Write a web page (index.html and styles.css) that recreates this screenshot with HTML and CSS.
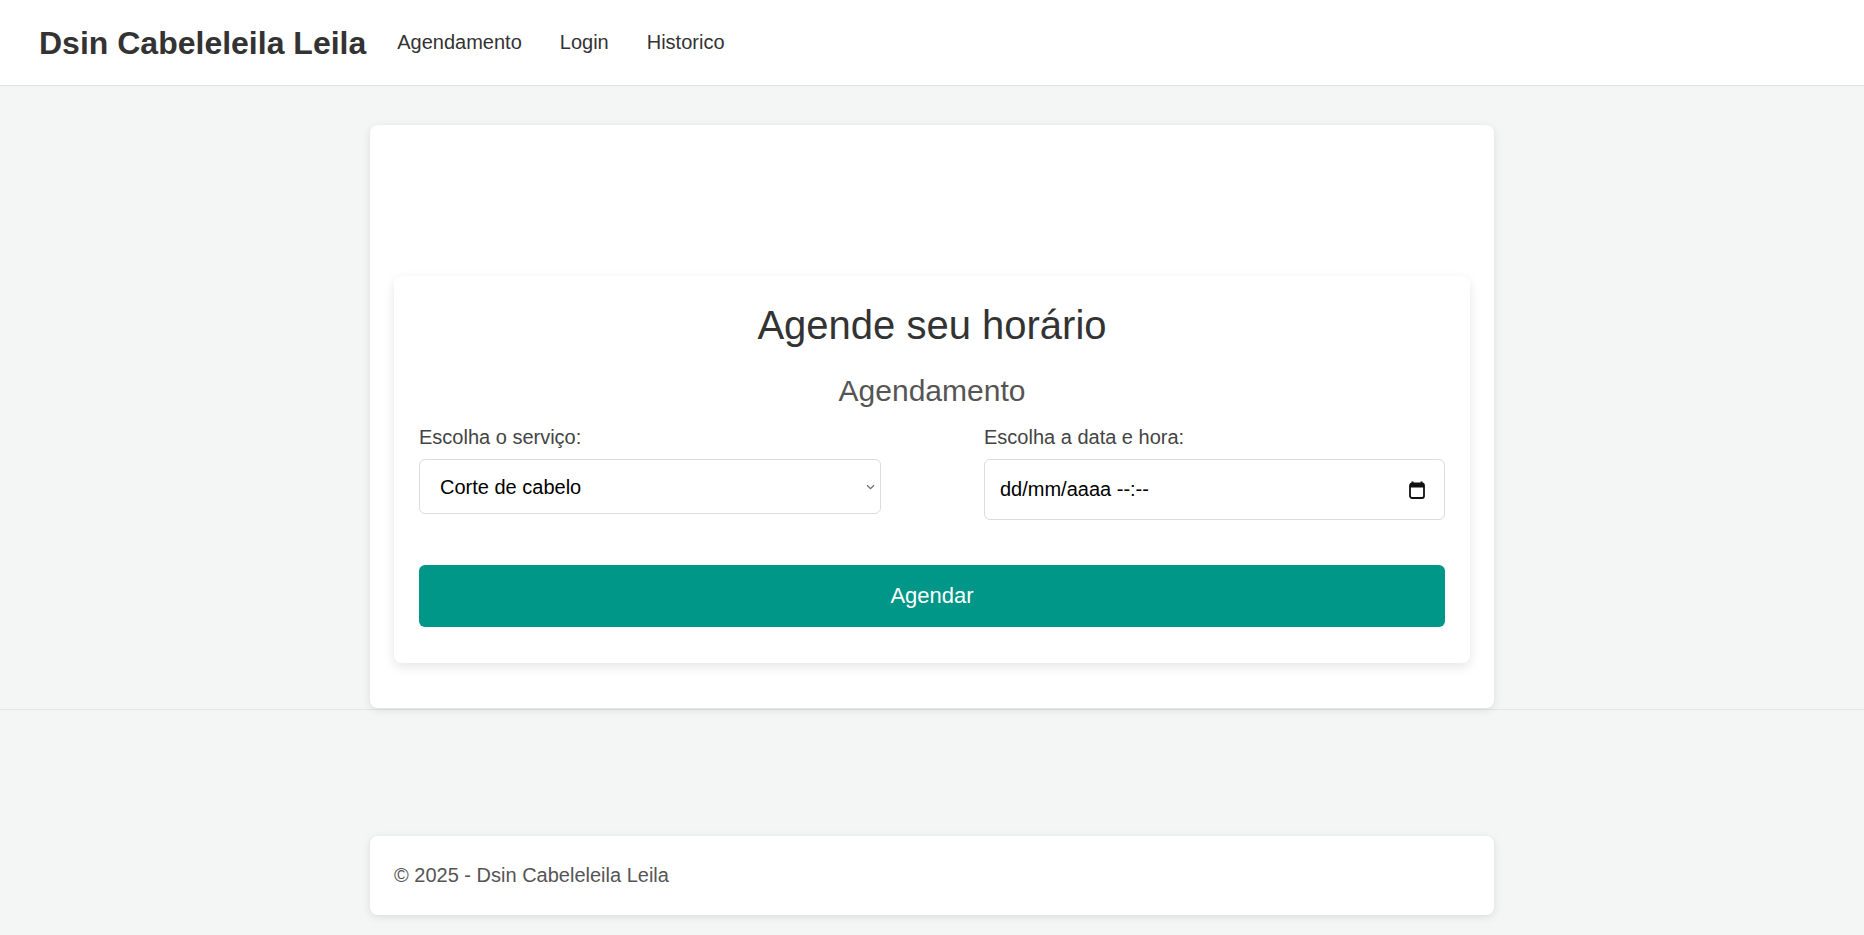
FILE: index.html
```html
<!DOCTYPE html>
<html lang="pt-BR">
<head>
<meta charset="utf-8">
<title>Dsin Cabeleleila Leila</title>
<link rel="stylesheet" href="styles.css">
</head>
<body>
<header class="topbar">
  <a class="brand" href="#">Dsin Cabeleleila Leila</a>
  <nav class="nav">
    <a class="nav-link" href="#">Agendamento</a>
    <a class="nav-link" href="#">Login</a>
    <a class="nav-link" href="#">Historico</a>
  </nav>
</header>

<main class="main">
  <section class="page-card">
    <div class="spacer"></div>
    <div class="form-card">
      <h1 class="title">Agende seu horário</h1>
      <h2 class="subtitle">Agendamento</h2>
      <form class="form">
        <div class="fields">
          <div class="field">
            <label class="label" for="servico">Escolha o serviço:</label>
            <div class="select-wrap">
              <select class="select" id="servico">
                <option>Corte de cabelo</option>
                <option>Coloração</option>
                <option>Escova</option>
              </select>
              <svg class="chevron" width="9" height="6" viewBox="0 0 9 6" aria-hidden="true">
                <path d="M1 1.2 L4.5 4.6 L8 1.2" fill="none" stroke="#6f6f6f" stroke-width="1.3"/>
              </svg>
            </div>
          </div>
          <div class="field">
            <label class="label" for="data">Escolha a data e hora:</label>
            <div class="date-field" id="data">
              <span class="date-text">dd/mm/aaaa --:--</span>
              <svg class="cal-icon" width="16" height="18" viewBox="0 0 16 18" aria-hidden="true">
                <rect x="2.5" y="0.5" width="2" height="3" fill="#111"/>
                <rect x="11.5" y="0.5" width="2" height="3" fill="#111"/>
                <rect x="1" y="2.5" width="14" height="14.5" rx="2" ry="2" fill="none" stroke="#111" stroke-width="1.8"/>
                <rect x="1" y="2.5" width="14" height="4" fill="#111"/>
              </svg>
            </div>
          </div>
        </div>
        <button class="btn" type="button">Agendar</button>
      </form>
    </div>
  </section>
</main>

<footer class="footer">
  <div class="footer-card">© 2025 - Dsin Cabeleleila Leila</div>
</footer>
</body>
</html>
```
FILE: styles.css
```css
* { box-sizing: border-box; }

html, body {
  margin: 0;
  padding: 0;
}

body {
  background: #f4f5f5;
  font-family: "Liberation Sans", Arial, sans-serif;
  color: #333;
  min-height: 935px;
}

.topbar {
  height: 86px;
  background: #fff;
  border-bottom: 1px solid #dfe2e6;
  display: flex;
  align-items: center;
  padding: 0 0 0 39px;
}

.brand {
  font-size: 32px;
  font-weight: 700;
  color: #333;
  text-decoration: none;
  margin-right: 12px;
  line-height: 1;
}

.nav {
  display: flex;
  align-items: center;
}

.nav-link {
  font-size: 20px;
  color: #333;
  text-decoration: none;
  padding: 0 19px;
}

.main {
  padding-top: 39px;
  display: flex;
  justify-content: center;
}

.page-card {
  width: 1124px;
  background: #fff;
  border-radius: 8px;
  box-shadow: 0 2px 8px rgba(0, 0, 0, 0.1);
  padding: 0 24px 45px;
}

.spacer {
  height: 151px;
}

.form-card {
  background: #fff;
  border-radius: 8px;
  box-shadow: 0 4px 12px rgba(0, 0, 0, 0.1);
  padding: 26px 25px 36px;
}

.title {
  margin: 0;
  font-size: 40px;
  font-weight: 400;
  text-align: center;
  color: #333;
  line-height: 46px;
}

.subtitle {
  margin: 26px 0 18px;
  font-size: 30px;
  font-weight: 400;
  text-align: center;
  color: #555;
  line-height: 34px;
}

.fields {
  display: grid;
  grid-template-columns: 462px 461px;
  justify-content: space-between;
  align-items: start;
}

.field {
  display: flex;
  flex-direction: column;
}

.label {
  font-size: 20px;
  color: #444;
  line-height: 23px;
  margin-bottom: 10px;
}

.select-wrap {
  position: relative;
}

.select {
  width: 100%;
  height: 55px;
  font-family: "Liberation Sans", Arial, sans-serif;
  font-size: 20px;
  color: #000;
  background: #fff;
  border: 1px solid #dcdcdc;
  border-radius: 6px;
  padding: 0 30px 0 20px;
  -webkit-appearance: none;
  appearance: none;
}

.chevron {
  position: absolute;
  right: 6px;
  top: 25px;
  pointer-events: none;
}

.date-field {
  height: 61px;
  border: 1px solid #dcdcdc;
  border-radius: 6px;
  background: #fff;
  display: flex;
  align-items: center;
  justify-content: space-between;
  padding: 0 19px 0 15px;
}

.date-text {
  font-size: 20px;
  color: #000;
}

.cal-icon {
  display: block;
}

.btn {
  margin-top: 45px;
  width: 100%;
  height: 62px;
  border: none;
  border-radius: 6px;
  background: #009688;
  color: #fff;
  font-family: "Liberation Sans", Arial, sans-serif;
  font-size: 22px;
  cursor: pointer;
}

.footer {
  border-top: 1px solid #e3e5e6;
  margin-top: 1px;
  padding-top: 126px;
  display: flex;
  justify-content: center;
}

.footer-card {
  width: 1124px;
  height: 79px;
  background: #fff;
  border-radius: 8px;
  box-shadow: 0 2px 8px rgba(0, 0, 0, 0.1);
  padding: 0 24px;
  display: flex;
  align-items: center;
  font-size: 20px;
  color: #555;
}
```
